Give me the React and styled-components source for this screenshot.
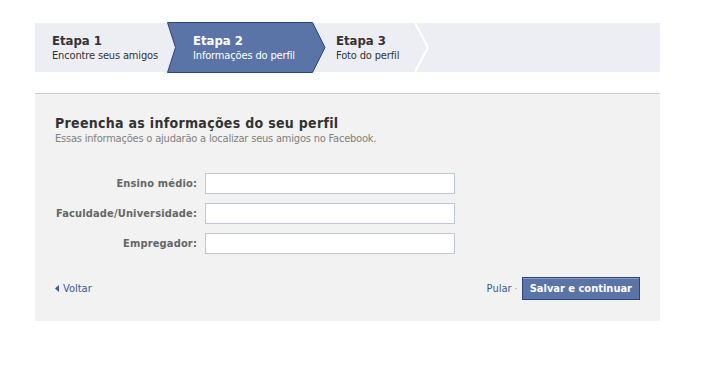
import React from "react";
import styled, { createGlobalStyle } from "styled-components";

const Global = createGlobalStyle`
  html, body { margin: 0; padding: 0; background: #fff; }
  body { font-family: "DejaVu Sans Condensed", "DejaVu Sans", Tahoma, sans-serif; color: #333; }
  * { box-sizing: border-box; }
`;

const Page = styled.div`
  padding: 23px 0 0 35px;
  width: 660px;
`;

const StepBar = styled.div`
  display: flex;
  height: 49px;
  background: #eceef3;
`;

const Step = styled.div`
  position: relative;
  width: ${(p) => p.$w}px;
  padding-left: ${(p) => p.$pl}px;
  display: flex;
  flex-direction: column;
  justify-content: center;
  color: ${(p) => (p.$active ? "#fff" : "#333")};
`;

const StepShape = styled.svg`
  position: absolute;
  left: 0;
  top: -1px;
  z-index: 0;
`;

const StepTitle = styled.div`
  position: relative;
  font-size: 13px;
  font-weight: bold;
  line-height: 16px;
`;

const StepSub = styled.div`
  position: relative;
  font-size: 11px;
  line-height: 14px;
  letter-spacing: -0.15px;
`;

const Separator = styled.svg`
  display: block;
  align-self: center;
`;

const Panel = styled.div`
  margin-top: 21px;
  background: #f2f2f2;
  border-top: 1px solid #cccccc;
  padding: 21px 20px 0 20px;
  height: 228px;
`;

const Title = styled.h2`
  margin: 0;
  font-size: 14px;
  font-weight: bold;
  color: #333;
  line-height: 17px;
  letter-spacing: 0.3px;
`;

const Subtitle = styled.div`
  font-size: 11px;
  color: #808080;
  line-height: 13px;
  letter-spacing: -0.2px;
`;

const Form = styled.div`
  margin-top: 28px;
  display: grid;
  grid-template-columns: 142px 250px;
  column-gap: 8px;
  row-gap: 9px;
  align-items: center;
`;

const Label = styled.label`
  text-align: right;
  font-size: 11px;
  font-weight: bold;
  color: #666;
  letter-spacing: 0.15px;
`;

const Input = styled.input`
  height: 21px;
  width: 250px;
  border: 1px solid #bdc7d8;
  background: #fff;
  margin: 0;
  padding: 2px 3px;
  font-family: inherit;
  font-size: 11px;
`;

const Actions = styled.div`
  margin-top: 23px;
  display: flex;
  align-items: center;
  justify-content: space-between;
`;

const Link = styled.a`
  color: #3b5998;
  font-size: 11px;
  text-decoration: none;
  display: inline-flex;
  align-items: center;
  gap: 4px;
  cursor: pointer;
`;

const Right = styled.div`
  display: flex;
  align-items: center;
`;

const Dot = styled.span`
  color: #999;
  font-size: 11px;
  margin: 0 4px 0 3px;
`;

const Button = styled.button`
  height: 23px;
  padding: 0 7px;
  background: #5b74a8;
  border: 1px solid #29447e;
  box-shadow: inset 0 1px 0 #8a9cc2;
  color: #fff;
  font-family: inherit;
  font-weight: bold;
  font-size: 11px;
  cursor: pointer;
`;

export default function App() {
  return (
    <>
      <Global />
      <Page>
        <StepBar>
          <Step $w={132} $pl={17}>
            <StepTitle>Etapa 1</StepTitle>
            <StepSub>Encontre seus amigos</StepSub>
          </Step>
          <Step $w={158} $pl={26} $active>
            <StepShape width="160" height="51" viewBox="0 0 160 51">
              <polygon
                points="0.5,0.5 145.5,0.5 158,25.5 145.5,50.5 0.5,50.5 8.5,25.5"
                fill="#5b74a8"
                stroke="#29447e"
                strokeWidth="1"
              />
            </StepShape>
            <StepTitle>Etapa 2</StepTitle>
            <StepSub>Informações do perfil</StepSub>
          </Step>
          <Step $w={90} $pl={11}>
            <StepTitle>Etapa 3</StepTitle>
            <StepSub>Foto do perfil</StepSub>
          </Step>
          <Separator width="16" height="49" viewBox="0 0 16 49">
            <polyline points="0,0 13,24.5 0,49" fill="none" stroke="#fff" strokeWidth="2" />
          </Separator>
        </StepBar>
        <Panel>
          <Title>Preencha as informações do seu perfil</Title>
          <Subtitle>Essas informações o ajudarão a localizar seus amigos no Facebook.</Subtitle>
          <Form>
            <Label>Ensino médio:</Label>
            <Input type="text" />
            <Label>Faculdade/Universidade:</Label>
            <Input type="text" />
            <Label>Empregador:</Label>
            <Input type="text" />
          </Form>
          <Actions>
            <Link>
              <svg width="4" height="7" viewBox="0 0 4 7">
                <polygon points="4,0 0,3.5 4,7" fill="#3b5998" />
              </svg>
              Voltar
            </Link>
            <Right>
              <Link>Pular</Link>
              <Dot>·</Dot>
              <Button>Salvar e continuar</Button>
            </Right>
          </Actions>
        </Panel>
      </Page>
    </>
  );
}
